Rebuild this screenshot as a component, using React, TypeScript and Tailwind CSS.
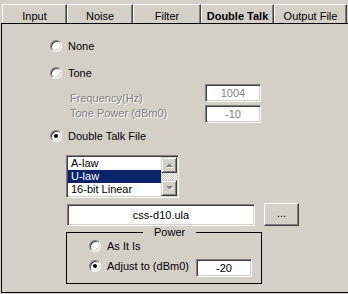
const sunken =
  "border border-t-[#808080] border-l-[#808080] border-b-white border-r-white shadow-[inset_1px_1px_0_#404040,inset_-1px_-1px_0_#d4d0c8]";
const raised =
  "border border-t-white border-l-white border-b-[#404040] border-r-[#404040] shadow-[inset_-1px_-1px_0_#808080]";
const raisedScroll =
  "border border-t-[#d4d0c8] border-l-[#d4d0c8] border-b-[#404040] border-r-[#404040] shadow-[inset_1px_1px_0_#fff,inset_-1px_-1px_0_#808080]";
const disabledText = "text-[#808080] [text-shadow:1px_1px_0_#fff]";

const tabs = [
  { label: "Input", w: "w-[65px]" },
  { label: "Noise", w: "w-[66px]" },
  { label: "Filter", w: "w-[68px]" },
  { label: "Double Talk", w: "w-[73px]", active: true },
  { label: "Output File", w: "w-[73px]" },
];

function Radio({ checked }: { checked?: boolean }) {
  return (
    <span className="grid h-[12px] w-[12px] shrink-0 place-items-center rounded-full border border-t-[#808080] border-l-[#808080] border-b-white border-r-white bg-white shadow-[inset_1px_1px_0_#404040,inset_-1px_-1px_0_#d4d0c8]">
      {checked && <span className="h-[4px] w-[4px] rounded-full bg-black" />}
    </span>
  );
}

function RadioRow({ label, checked }: { label: string; checked?: boolean }) {
  return (
    <div className="flex h-[12px] items-center gap-[6px]">
      <Radio checked={checked} />
      <span className="whitespace-nowrap">{label}</span>
    </div>
  );
}

function Arrow({ up }: { up?: boolean }) {
  return (
    <svg width="14" height="14" viewBox="0 0 14 14">
      {up ? (
        <>
          <polygon points="4,9 11,9 7.5,5.5" fill="#fff" transform="translate(1,1)" />
          <polygon points="4,9 11,9 7.5,5.5" fill="#808080" />
        </>
      ) : (
        <>
          <polygon points="4,5 11,5 7.5,8.5" fill="#fff" transform="translate(1,1)" />
          <polygon points="4,5 11,5 7.5,8.5" fill="#808080" />
        </>
      )}
    </svg>
  );
}

export default function App() {
  return (
    <div className="h-[294px] w-[348px] overflow-hidden bg-[#d4d0c8] font-['Liberation_Sans',Arial,sans-serif] text-[11px] leading-[13px] text-black">
      <div className="flex h-[23px] pl-[2px] pt-[4px]">
        {tabs.map((t) => (
          <div
            key={t.label}
            className={`${t.w} h-[19px] shrink-0 border-l border-t border-r border-l-white border-t-white border-r-[#404040] pt-[5px] text-center shadow-[inset_-1px_0_0_#808080] ${t.active ? "font-bold" : ""}`}
          >
            {t.label}
          </div>
        ))}
      </div>

      <div className="ml-[1px] flex h-[270px] flex-col border-l border-t border-b border-black pl-[48px]">
        <div className="mt-[16px]">
          <RadioRow label="None" />
        </div>
        <div className="mt-[15px]">
          <RadioRow label="Tone" />
        </div>

        <div className="mt-[5px] flex">
          <div className={`ml-[20px] w-[135px] pt-[7px] leading-[15px] ${disabledText}`}>
            <div>Frequency(Hz)</div>
            <div>Tone Power (dBm0)</div>
          </div>
          <div className="flex flex-col gap-[3px]">
            <div className={`${sunken} h-[18px] w-[56px] bg-white text-center leading-[16px] text-[#808080]`}>1004</div>
            <div className={`${sunken} h-[18px] w-[56px] bg-white text-center leading-[16px] text-[#808080]`}>-10</div>
          </div>
        </div>

        <div className="mt-[7px]">
          <RadioRow label="Double Talk File" checked />
        </div>

        <div className={`${sunken} ml-[16px] mt-[13px] flex h-[43px] w-[113px] bg-white p-[1px]`}>
          <div className="flex-1">
            <div className="h-[13px] pl-[3px]">A-law</div>
            <div className="h-[13px] bg-[#0a246a] pl-[3px] text-white">U-law</div>
            <div className="h-[13px] pl-[3px]">16-bit Linear</div>
          </div>
          <div className="flex w-[16px] flex-col">
            <div className={`${raisedScroll} grid h-[16px] place-items-center bg-[#d4d0c8]`}>
              <Arrow up />
            </div>
            <div className="flex-1 bg-[image:repeating-conic-gradient(#d4d0c8_0_25%,#fff_0_50%)] bg-size-[2px_2px]" />
            <div className={`${raisedScroll} grid h-[16px] place-items-center bg-[#d4d0c8]`}>
              <Arrow />
            </div>
          </div>
        </div>

        <div className="mt-[5px] flex items-start">
          <div className={`${sunken} ml-[17px] mt-[1px] h-[22px] w-[188px] bg-white text-center leading-[20px]`}>
            css-d10.ula
          </div>
          <div className={`${raised} ml-[9px] h-[23px] w-[35px] text-center leading-[19px]`}>...</div>
        </div>

        <fieldset className="ml-[16px] w-[196px] border border-black pb-[6px] pl-[22px]">
          <legend className="ml-[54px] px-[11px] leading-[13px]">Power</legend>
          <div className="mt-[1px]">
            <RadioRow label="As It Is" />
          </div>
          <div className="mt-[7px] flex items-start">
            <div className="mt-[1px] flex h-[12px] items-center gap-[6px]">
              <Radio checked />
              <span className="w-[89px] whitespace-nowrap">Adjust to (dBm0)</span>
            </div>
            <div className={`${sunken} h-[18px] w-[56px] bg-white text-center leading-[16px]`}>-20</div>
          </div>
        </fieldset>
      </div>
    </div>
  );
}
